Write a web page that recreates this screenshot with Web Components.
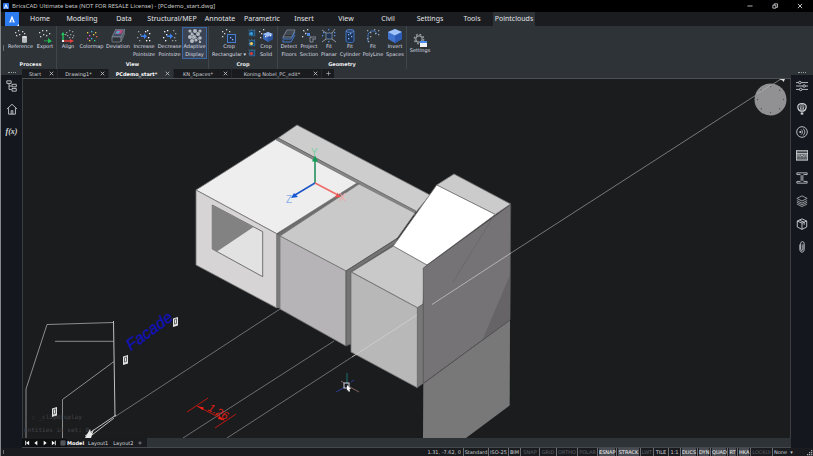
<!DOCTYPE html>
<html lang="en">
<head>
<meta charset="utf-8">
<title>BricsCAD Ultimate beta</title>
<style>
html,body{margin:0;height:100%;background:#000}
body{font:5px/8px "DejaVu Sans",sans-serif;color:#d6d9dc;overflow:hidden}
</style>
</head>
<body>
<cad-app></cad-app>
<script>
const reset = `*{box-sizing:border-box}button{font:inherit;color:inherit;background:none;border:0;padding:0;margin:0}svg{display:block}`;
const define = (name, css, html) => customElements.define(name, class extends HTMLElement {
  connectedCallback() {
    if (this.shadowRoot) return;
    const t = document.createElement('template');
    t.innerHTML = `<style>${reset}${css}</style>` + (typeof html === 'function' ? html(this) : html);
    this.attachShadow({mode: 'open'}).append(t.content.cloneNode(true));
  }
});

const dots = (pts, c = '#cfd3d6') => pts.map(([x, y, f]) => `<rect x="${x}" y="${y}" width="1.3" height="1.3" fill="${f || c}"/>`).join('');
const line = (d, c = '#cfd3d6', w = 1) => `<path d="${d}" fill="none" stroke="${c}" stroke-width="${w}"/>`;

/* Icons share a 14 by 14 grid */
const icons = {
  reference: dots([[1,3],[4,1],[8,2],[10,4],[2,6],[5,5]]) + `<path d="M8 8c0-1.400 5-1.400 5 0v5c0 1.200-5 1.200-5 0z" fill="#b9bdc0"/><ellipse cx="10.500" cy="8" rx="2.500" ry=".8" fill="#f0f0f0"/>`,
  export: dots([[1,3],[4,1],[8,1],[11,4],[2,7],[5,5],[8,6]]) + `<path d="M6 11.500h4v-2.500l4 3.300-4 2v-2H6z" fill="#20c050"/>`,
  align: dots([[5,3],[8,1],[11,2],[6,6],[9,5],[12,6],[8,8],[4,5],[11,8]], '#92989c') + line('M2 12V5', '#25c45a', 1.400) + `<path d="M0 6l2-3 2 3z" fill="#25c45a"/>` + line('M2 12h8', '#e8403c', 1.400) + `<path d="M9 10l4 2-4 2z" fill="#e8403c"/><rect x="1" y="11" width="2" height="2" fill="#eee"/>`,
  colormap: dots([[2,3,'#ecd23c'],[6,2,'#35b8e8'],[10,3,'#ecd23c'],[4,6,'#e24fc3'],[8,5,'#ecd23c'],[11,7,'#ef6a48'],[2,9,'#e24fc3'],[6,9,'#35b8e8'],[9,11,'#35d28c'],[4,11,'#ecd23c']]),
  deviation: `<path d="M1 8L5 0h9l-4 8z" fill="#43506a" stroke="#8a93a0" stroke-width=".7"/><path d="M4 5L6 1h6l-2 4z" fill="#b84b77"/><path d="M4.500 4.500L6 2h3L8 4.500z" fill="#4aa7c8"/><path d="M1 8v4q0 1 1 1h7l1-1V8z" fill="#30343a" stroke="#858b92" stroke-width=".7"/><path d="M10 8l4-8v4l-4 9z" fill="#565d66" stroke="#858b92" stroke-width=".5"/>`,
  increase: dots([[1,2],[3,5],[0,8],[2,11]], '#989da1') + `<path d="M4 6.400h3V4.500l3 2.700-3 2.700V8H4z" fill="#3b83ef"/>` + dots([[10,1],[12,4],[11,8],[9,11],[12,11],[8,2]], '#f4f4f4'),
  decrease: dots([[1,2],[3,5],[0,8],[2,11],[4,1]], '#f4f4f4') + `<path d="M4 6.400h3V4.500l3 2.700-3 2.700V8H4z" fill="#3b83ef"/>` + dots([[10,1],[12,4],[11,8],[9,11],[12,11]], '#989da1'),
  adaptive: [[2,2,1.6],[7,2,2],[12,2,1.6],[4,5,1.5],[10,5,2],[2,8,2],[6,8,2],[12,9,1.8],[4,12,2],[8,11,1.6],[12,13,1.2]].map(([x, y, r]) => `<circle cx="${x}" cy="${y}" r="${r}" fill="#b6bbc2"/>`).join('') + line('M2 2l10 10M12 2L2 12', '#9aa0a8', .7),
  croprect: dots([[0,2],[4,0],[2,4],[7,2],[0,7]]) + `<rect x="5.500" y="5.500" width="8" height="8" fill="#20324e" stroke="#477cc9"/>` + dots([[8,8],[10,10]], '#9ab8e8'),
  cropsolid: dots([[0,2],[4,0],[2,4],[1,8]]) + `<path d="M9 3l5 2v5l-5 3-5-3V5z" fill="#3867ba"/><path d="M9 3l5 2-5 3-5-3z" fill="#9ec0f5"/><path d="M9 8v5l5-3V5z" fill="#2b529c"/>` + dots([[6,7],[11,6]], '#fff'),
  floors: line('M1 8l4-7h8l-3 7z', '#8c96a4', .8) + line('M3 5h8M4 3h8', '#6f7b8a', .6) + line('M1 8v2h8l4-7M1 11v2h8l4-7', '#457ed8', .9),
  section: dots([[1,1],[5,0],[3,4],[0,7]]) + `<rect x="5" y="4" width="3" height="3" fill="#4384ea"/>` + line('M8 13V8h6v2h-3v3z', '#949da7', .8) + line('M2 2l10 9', '#7d858d', .5),
  planar: `<rect x="4" y="4" width="6" height="6" fill="#203250" stroke="#84919f" stroke-width=".8"/>` + line('M0 1l4 3M13 0l-3 4M0 13l4-3M14 13l-4-3', '#a9b0b7', .8) + dots([[0,6],[6,0],[12,6],[6,12],[1,3],[12,3]], '#4f8eee'),
  cylinder: `<path d="M3 2v10c0 2 8 2 8 0V2" fill="#1e3252" stroke="#4379c9" stroke-width=".9"/><ellipse cx="7" cy="2" rx="4" ry="1.400" fill="#263d60" stroke="#5c92e2" stroke-width=".8"/>` + dots([[5,5],[8,7],[5,9],[7,4]], '#7fb0f8'),
  polyline: line('M2 13V5l3-3h4l2 3', '#4177c5', .9) + dots([[1,1],[4,3],[8,0],[12,1],[9,4],[4,7],[1,9],[2,12],[12,5]], '#9da3a8'),
  invert: `<path d="M7 0l7 3v7l-7 4-7-4V3z" fill="#3f73cd"/><path d="M7 0l7 3-7 3.500L0 3z" fill="#9fc3fa"/><path d="M7 6.500V14l7-4V3z" fill="#2c5cb5"/>`,
  settings: `<circle cx="6" cy="6" r="3.200" fill="none" stroke="#92989d" stroke-width="1.300"/><circle cx="6" cy="6" r="4.600" fill="none" stroke="#92989d" stroke-width="1.600" stroke-dasharray="1.800 1.810"/><rect x="7" y="8" width="7" height="6" fill="#f0f2f4"/><rect x="7" y="8" width="7" height="2" fill="#4a8df0"/>`,
  tree: line('M1 1h5v3H1zM3.500 4v7h3M3.500 7h3M7 5h5v3H7zM7 10h5v3H7z'),
  home: line('M1 7l6-5.500L13 7M3 6v7h8V6M6 13V9h2v4'),
  sliders: line('M0 3h3M6 3h8M0 7h8M11 7h3M0 11h4M7 11h7') + [[4.5,3],[9.5,7],[5.5,11]].map(([x, y]) => `<circle cx="${x}" cy="${y}" r="1.500" fill="none" stroke="#cfd3d6"/>`).join(''),
  balloon: `<path d="M7 .8C-.5.8 2 8 5.300 9.500h3.400C12 8 14.500.8 7 .8z" fill="none" stroke="#cfd3d6" stroke-width="1.400"/>` + line('M7 1v8M4.800 2.500c0 2 .5 5 1 6M9.200 2.500c0 2-.5 5-1 6') + `<rect x="5.500" y="11" width="3" height="2.500" fill="#cfd3d6"/>`,
  radio: `<circle cx="7" cy="7" r="6.200" fill="none" stroke="#cfd3d6"/><circle cx="5" cy="7" r="1.200" fill="#cfd3d6"/>` + line('M6 4c2 1.500 2 4.500 0 6M8 2.800c3 2.200 3 6.200 0 8.400', '#cfd3d6', .9),
  wall: `<rect x=".5" y="2" width="13" height="11" fill="#5f6468"/>` + line('M0 2h14M0 5.500h14M0 13h14M.5 2v11M13.500 2v11', '#d5d8da') + line('M2 4h11', '#33373b', .9) + line('M1 9l2-2 2 2 2-2 2 2 2-2 2 2', '#c9cccf', .9),
  beam: line('M1 1h12v2H9L8 4v6l1 1h4v2H1v-2h4l1-1V4L5 3H1z', '#b9bdc0', 1.100),
  layers: line('M7 1l6 3-6 3-6-3zM1 6.500l6 3 6-3M1 8.500l6 3 6-3M1 10.500l6 3 6-3', '#b9bdc0', .9),
  cube: line('M7 1l5.500 2.500v7L7 13.300l-5.500-2.800v-7zM1.500 3.500L7 6l5.500-2.500M7 6v7M4 2.500l5.500 2.500v3', '#c8cbce', 1.100),
  clip: line('M4.500 4v6c0 4 5 4 5 0V3c0-3-4-3-4 0v6.500c0 2 2.500 2 2.500 0V4', '#c8cbce', 1.100),
  first: `<path d="M3 2h2v10H3zM12 2v10L5 7z" fill="#fff"/>`,
  prev: `<path d="M10 2v10L3 7z" fill="#fff"/>`,
  next: `<path d="M4 2v10l7-5z" fill="#fff"/>`,
  last: `<path d="M9 2h2v10H9zM2 2v10l7-5z" fill="#fff"/>`,
  sheet: line('M2 2h10v10H2zM2 5h10M2 9h10M5 2v10M9 2v10', '#a4a8ac'),
  close: line('M2 2l10 10M12 2L2 12', '#c9ccd0', 2.200),
  minimize: line('M1 7h12', '#c9ccd0', 2),
  restore: line('M2 5h7v7H2zM5 5V2h8v8H9', '#c9ccd0', 2),
  plus: line('M7 1v12M1 7h12', '#b8bcc0', 1.800),
  logo: `<path d="M2 13L7 1l5 12H9.500L7 7l-2.500 6z" fill="#fff"/><path d="M6 10h2v3H6z" fill="#bcd5ff"/>`,
};
icons.brand = `<rect width="14" height="14" rx="2" fill="#2c73e8"/>` + icons.logo;
const mini = c => `<rect x="3" y="3" width="9" height="9" fill="#1d4468" stroke="#3583ba"/>` + dots([[1,1],[6,0],[11,1],[1,8]], '#5aa6da') + `<circle cx="6" cy="8" r="2.800" fill="${c}"/>`;
icons.miniA = mini('#3d9edc');
icons.miniB = mini('#f2c75c');
icons.miniC = mini('#d83a3a');

define('cad-icon', `:host{display:block;width:14px;height:14px;flex:none}svg{width:100%;height:100%}`,
  el => `<svg viewBox="0 0 14 14" aria-hidden="true">${icons[el.getAttribute('name')]}</svg>`);

define('title-bar', `
  :host{display:flex;align-items:center;height:12px;background:#000;padding:0 10px 0 2px;gap:3px;color:#c8c8c8;font:6px/12px "Noto Sans",sans-serif}
  .brand{width:6px;height:6px}
  span{flex:1;white-space:nowrap}
  nav{display:flex;gap:19px}
  cad-icon{width:6px;height:6px}`,
  `<cad-icon class="brand" name="brand"></cad-icon><span>BricsCAD Ultimate beta (NOT FOR RESALE License) - [PCdemo_start.dwg]</span>
   <nav><button aria-label="Minimize"><cad-icon name="minimize"></cad-icon></button><button aria-label="Restore"><cad-icon name="restore"></cad-icon></button><button aria-label="Close"><cad-icon name="close"></cad-icon></button></nav>`);

define('menu-bar', `
  :host{display:flex;height:14px;background:#1b1c20;padding-left:4px;font:7px/14px "Noto Sans",sans-serif;color:#e2e4e6}
  button{width:42px;height:14px;text-align:center;white-space:nowrap}
  .app{width:14px;background:#2d7bf0;display:grid;place-items:center;position:relative}
  .app::after{content:"";position:absolute;right:0;bottom:0;border:1px solid #fff;border-top-color:transparent;border-left-color:transparent}
  .app cad-icon{width:8px;height:8px}
  .wide{width:54px}.on{background:#2e3338}`,
  `<button class="app" aria-label="Application menu"><cad-icon name="logo"></cad-icon></button>` +
  ['Home','Modeling','Data','Structural/MEP','Annotate','Parametric','Insert','View','Civil','Settings','Tools','Pointclouds']
    .map(m => `<button class="${m.includes('/') ? 'wide' : ''}${m === 'Pointclouds' ? 'on' : ''}">${m}</button>`).join(''));

define('ribbon-tool', `
  :host{display:block;width:var(--w,20px)}
  button{width:100%;height:32px;display:flex;flex-direction:column;align-items:center;padding-top:2px;white-space:nowrap}
  .label{margin-top:-1px;display:block;text-align:center}
  :host([on]) button{background:#3a4454;outline:1px solid #3c68a8;outline-offset:-1px}`,
  el => `<button><cad-icon name="${el.getAttribute('icon')}"></cad-icon><span class="label"><slot></slot></span></button>`);

define('ribbon-panel', `
  :host{display:flex;flex-direction:column;border-right:1px solid #41464b;padding:1px 1px 0}
  .tools{display:flex}
  h2{margin:0;padding-top:1px;font:bold 5px/8px "DejaVu Sans",sans-serif;text-align:center;color:#eceeef}`,
  el => `<div class="tools"><slot></slot></div><h2>${el.getAttribute('label') || ''}</h2>`);

const tool = (icon, label, w, extra = '') => `<ribbon-tool icon="${icon}" style="--w:${w}px" ${extra}>${label}</ribbon-tool>`;
define('cad-ribbon', `
  :host{display:flex;height:43px;background:#2e3338;color:#dcdfe2}
  .grip{width:4px;display:grid;place-items:center}
  .grip i{width:1px;height:6px;background:#6a7076}
  .minis{width:8px;display:flex;flex-direction:column;gap:2px;padding-top:2px}
  .minis cad-icon{width:8px;height:8px}
  .single{padding-top:5px;border:0}`,
  `<div class="grip"><i></i></div>
   <ribbon-panel label="Process">${tool('reference','Reference',29)}${tool('export','Export',20)}</ribbon-panel>
   <ribbon-panel label="View">${tool('align','Align',20)}${tool('colormap','Colormap',27)}${tool('deviation','Deviation',26)}${tool('increase','Increase<br>Pointsize',26)}${tool('decrease','Decrease<br>Pointsize',25)}${tool('adaptive','Adaptive<br>Display',25,'on')}</ribbon-panel>
   <ribbon-panel label="Crop">${tool('croprect','Crop<br>Rectangular ▾',38)}<div class="minis"><button aria-label="Crop inside"><cad-icon name="miniA"></cad-icon></button><button aria-label="Crop highlight"><cad-icon name="miniB"></cad-icon></button><button aria-label="Crop remove"><cad-icon name="miniC"></cad-icon></button></div>${tool('cropsolid','Crop<br>Solid',20)}</ribbon-panel>
   <ribbon-panel label="Geometry">${tool('floors','Detect<br>Floors',20)}${tool('section','Project<br>Section',20)}${tool('planar','Fit<br>Planar',20)}${tool('cylinder','Fit<br>Cylinder',22)}${tool('polyline','Fit<br>PolyLine',24)}${tool('invert','Invert<br>Spaces',20)}</ribbon-panel>
   <ribbon-panel class="single">${tool('settings','Settings',24)}</ribbon-panel>`);

define('doc-tab', `
  :host{display:flex;align-items:center;height:9px;width:var(--w);padding:0 3px 0 6px;background:#191b1f;border-right:1px solid #24272b;color:#d0d4d7}
  :host([on]){background:#2e3338;font-weight:bold;color:#fff}
  .name{flex:1;text-align:center;white-space:nowrap;padding-right:7px}
  .x{width:5px;height:5px}cad-icon{width:5px;height:5px}`,
  `<button class="name"><slot></slot></button><button class="x" aria-label="Close tab"><cad-icon name="close"></cad-icon></button>`);

define('doc-tabs', `
  :host{display:flex;height:10px;background:#2e3338;border-bottom:1px solid #4b5054}
  .add{width:12px;height:9px;background:#191b1f;display:grid;place-items:center}
  .add cad-icon{width:5px;height:5px}`,
  [['Start',36],['Drawing1*',51],['PCdemo_start*',65,'on'],['KN_Spaces*',58],['Koning Nobel_PC_edit*',90]]
    .map(([n, w, on = '']) => `<doc-tab style="--w:${w}px" ${on}>${n}</doc-tab>`).join('') +
  `<button class="add" aria-label="New tab"><cad-icon name="plus"></cad-icon></button>`);

define('side-rail', `
  :host{display:flex;flex-direction:column;align-items:center;background:#14171d}
  .grip{width:100%;height:6px;background:#2e3338;display:grid;place-items:center}
  .grip i{width:8px;border-top:1px dotted #9ba0a4}
  .list{display:flex;flex-direction:column;gap:11px;padding-top:5px}
  cad-icon{width:12px;height:12px}
  button{height:12px;font:italic bold 8px/12px "Liberation Serif",serif;color:#d8dbdd}`,
  el => `<div class="grip"><i></i></div><div class="list">` + el.getAttribute('items').split(' ')
    .map(n => n === 'fx' ? `<button>f(x)</button>` : `<button aria-label="${n}"><cad-icon name="${n}"></cad-icon></button>`).join('') + `</div>`);

const poly = (p, f, s = 'none') => `<polygon points="${p}" fill="${f}" stroke="${s}" stroke-width=".8"/>`;
const marker = (x, y) => `<g transform="translate(${x} ${y})"><path d="M-2.500-3.500l5-1.500v8.500l-5 1.500z" fill="#e4e4e4"/><path d="M-1-2.500l2-.6v4.600l-2 .6z" fill="none" stroke="#333" stroke-width=".7"/></g>`;
define('model-view', `
  :host{display:grid;grid-template:minmax(0,1fr)/minmax(0,1fr);min-width:0;min-height:0;background:#1b1c1e;overflow:hidden}
  svg{width:100%;height:100%;min-height:0}
  .cmd{font:6px "DejaVu Sans Mono",monospace;fill:#444648}
  .blue{font:italic 16px "Liberation Sans",sans-serif;fill:#1212b4;stroke:#1212b4;stroke-width:.4}
  .red{font:italic 11px "Liberation Sans",sans-serif;fill:#e01c14}
  .axis{font:10px "Liberation Sans",sans-serif}`,
  `<svg viewBox="23 79 767 359" preserveAspectRatio="xMinYMin slice" role="img" aria-label="3D model">
   ${line('M116 416L280 309M183 438L334 341M227 438L352 357', '#77787a', .9)}
   ${line('M26 438V389L47 324.500l66.500-2M55 341.300h58.500M62.500 438V399.500L114 361.500', '#98999b', .9)}
   ${line('M113.500 321L115 417M116 415L85 436M114 418L88 438', '#c0c0c0', 1)}
   <path d="M85 438l5-9 1 4 3-4-3 9z" fill="#e8e8e8"/>
   ${marker(175.5,322)}${marker(125.5,360)}${marker(54.5,412)}
   <text class="blue" transform="translate(131 351) rotate(-36)">Facade</text>
   ${line('M187 412L208 398M215 428L236 414M197 406L224 420', '#c81812', .9)}
   <path d="M197 406l7 1.500-1.500 2.500zM225 420.500l-7-1.500 1.500-3z" fill="#ee2015"/>
   <text class="red" transform="translate(207 410) rotate(28)">1.26</text>
   ${poly('278,138 297,125 430,195 416,212','#cdcdcd','#777')}
   ${poly('275.500,139.500 278,138 416,211 414,215','#858585','#666')}
   ${poly('277,234 357,182.500 361,184 280,236.500','#6d6d6d')}
   ${poly('276.700,234 280,236 280,308 276.700,308','#7b7a7a')}
   ${poly('196,190 275.500,139.500 357,183 276.700,233.700','#eeeeee','#777')}
   ${poly('196,190 276.700,233.700 276.700,308 196,265','#d6d4d4','#777')}
   ${poly('212.300,205 262.700,231.700 262.700,276.700 212.300,249','#e3e2e2','#555')}
   ${poly('212.300,205 253.500,227 217,251.500 212.300,249','#828282')}
   ${poly('280,236 359,184 415,213 397,238.500 346,271','#c9c9c9','#777')}
   ${poly('280,236 346,271 346,346 280,309','#b6b4b6','#777')}
   ${poly('346,271 397,238.500 397,243 351,272 351,344 346,346','#737373','#555')}
   ${poly('351.500,272 393.500,246 427,265 423,304 417.300,307.700','#c9c9c9','#777')}
   ${poly('351,272 417.300,307.700 417.300,387.700 351,352','#b8b8b8','#777')}
   ${poly('417.300,307.700 424,304 424,383 417.300,387.700','#777')}
   ${poly('436.700,185 454,174 510.700,204 495.300,214.500','#cbcbcb','#777')}
   ${poly('436.700,185 495.300,214.500 427,265 393.300,246','#fff','#777')}
   ${poly('423.300,268 510.700,204.500 510,320 423.300,383.500','#757375','#555')}
   ${poly('423.300,383.500 510,320 509.700,405.500 466,438 423,438','#787878')}
   ${poly('510,275 510,320 482,341','#666467')}
   ${line('M494.300 215L453 282', '#666', .7)}${line('M423.300 383.500L510 320', '#505050', .9)}
   ${line('M352 357L417 315', '#cecece', .9)}${line('M432 304.500L511 253', '#b5b2b5')}${line('M511 253L781 79', '#77787a')}
   ${line('M315 183V158', '#178a54', 1.500)}<path d="M312 161.500l3-6 3 6z" fill="#0f9c55"/>
   ${line('M315 183L295 195', '#1c55c8', 1.500)}<path d="M291 198l3-5 4 4z" fill="#1558d6"/>
   ${line('M315 183L336 194', '#ee6b68', 1.500)}<path d="M341 197l-6 .500 2-5z" fill="#ef5350"/>
   <text class="axis" x="311" y="156" fill="#7fceaa">Y</text><text class="axis" x="286" y="203" fill="#86aee8">Z</text><text class="axis" x="339" y="201" fill="#f3a5a3">X</text>
   ${line('M347 373v11', '#23777b', .9)}${line('M336 392l9-5M354 380l-3 2', '#2f3fa0', .9)}${line('M341 381l3 2M350 387l9 5', '#8d6a68', .9)}
   <rect x="344" y="383" width="5" height="5" fill="none" stroke="#ccd"/><path d="M347 385l4 4-1.700.3.800 2-1.400.5-.800-2-1 1z" fill="#fff"/>
   <circle cx="770.500" cy="99.500" r="16" fill="#919193"/>
   ${[0,45,90,135,180,225,270,315].map(a => `<circle cx="770.500" cy="86.500" r=".7" fill="#555" transform="rotate(${a} 770.500 99.500)"/>`).join('')}
   ${line('M757 94L771 85', '#b2b2b4', .8)}<path d="M779 79l6 0-1.500 3-1-1.500z" fill="#ddd"/>
   <text class="cmd" x="24" y="419">: : _clipdisplay</text><text class="cmd" x="24" y="432">Entities in set: 0</text>
   </svg>`);

define('layout-tabs', `
  :host{display:flex;height:10px;background:#2e3338;color:#d4d8db}
  div{display:flex;align-items:center;background:#191b1f;padding-right:2px}
  button{height:8px}
  .nav{width:9px;display:grid;place-items:center;background:#0d0e10}
  .nav cad-icon{width:6px;height:6px}
  .tab{padding:0 3px 0 2px}
  .on{font-weight:bold;color:#fff;padding:0 2px 0 0}
  .add cad-icon{width:4px;height:4px}`,
  `<div>${['first','prev','next','last','sheet'].map(n => `<button class="nav" aria-label="${n}"><cad-icon name="${n}"></cad-icon></button>`).join('')}
   <button class="tab on">Model</button><button class="tab">Layout1</button><button class="tab">Layout2</button><button class="tab add" aria-label="Add layout"><cad-icon name="plus"></cad-icon></button></div>`);

define('status-bar', `
  :host{display:flex;justify-content:flex-end;align-items:center;height:8px;background:#191b1f;color:#c9cdd0}
  .grip{margin-right:auto;margin-left:2px;width:1px;height:4px;background:#6d7277}
  .pos{padding-right:2px;white-space:nowrap}
  button{width:var(--w);height:8px;border-left:1px solid #6b6f73;text-align:center;white-space:nowrap}
  .off{color:#5b6064}
  .on{background:#484c52;background-clip:content-box;padding:0 1px;color:#f2f3f4}
  .more{border:0}
  svg{width:8px;height:8px;margin-left:10px}`,
  `<i class="grip"></i><span class="pos">1.31, -7.62, 0</span>` +
  [['Standard',25],['ISO-25',20],['BIM',12],['SNAP',19,'off'],['GRID',17,'off'],['ORTHO',21,'off'],['POLAR',20,'off'],['ESNAP',19,'on'],['STRACK',24,'on'],['LWT',13,'off'],['TILE',15],['1:1',12],['DUCS',17,'on'],['DYN',13,'on'],['QUAD',17,'on'],['RT',10,'on'],['HKA',13,'on'],['LOCKUI',22,'off'],['None',16],['▾',7,'more']]
    .map(([t, w, c = '']) => `<button class="${c}" style="--w:${w}px">${t}</button>`).join('') +
  `<svg viewBox="0 0 8 8" aria-hidden="true">${dots([[6,2],[4,4],[6,4],[2,6],[4,6],[6,6]], '#a8acb0')}</svg>`);

define('cad-app', `
  :host{display:flex;flex-direction:column;height:100vh;box-sizing:border-box;background:#191b1f;border-left:1px solid #85898c}
  title-bar,menu-bar,cad-ribbon,status-bar{flex:none}
  main{flex:1 1 0px;min-height:0;display:grid;grid-template:minmax(0,1fr)/21px minmax(0,1fr) 22px}
  .work{display:grid;grid-template:auto minmax(0,1fr) auto/minmax(0,1fr);min-width:0;min-height:0}
  model-view{border-left:1px solid #3b3f43;border-right:1px solid #3b3f43}
  layout-tabs{border-bottom:1px solid #45494d}`,
  `<title-bar></title-bar><menu-bar></menu-bar>
   <cad-ribbon></cad-ribbon>
   <main><side-rail items="tree home fx"></side-rail>
   <div class="work"><doc-tabs></doc-tabs><model-view></model-view><layout-tabs></layout-tabs></div>
   <side-rail items="sliders balloon radio wall beam layers cube clip"></side-rail></main>
   <status-bar></status-bar>`);
</script>
</body>
</html>
